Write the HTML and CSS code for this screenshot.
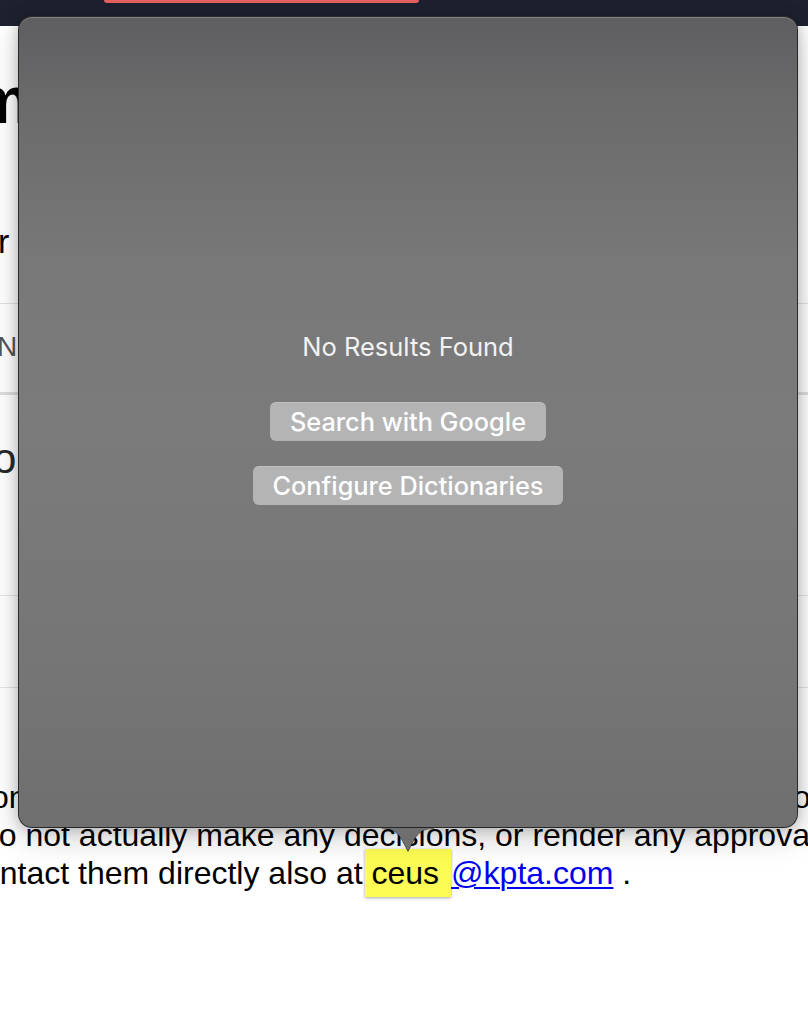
FILE: index.html
```html
<!DOCTYPE html>
<html lang="en">
<head>
<meta charset="utf-8">
<title>Lookup</title>
<link rel="stylesheet" href="styles.css">
</head>
<body>
<div class="topbar"><div class="top-btn"></div></div>
<main class="page">
  <section class="hero">
    <h1 class="hero-title">m</h1>
    <p class="hero-sub">r</p>
  </section>
  <section class="row row-tabs"><span class="tab-label">N</span></section>
  <section class="row row-body"><span class="body-label">o</span></section>
  <section class="row row-empty"></section>
  <section class="notice">
    <p class="notice-text">
      <span class="line line-1">on, the staff members are available to assist, but these do</span>
      <span class="line line-2">do not actually make any decisions, or render any approval</span>
      <span class="line line-3">contact them directly also at <span class="lookup-hl">ceus</span><a class="mail" href="#">@kpta.com</a> .</span>
    </p>
  </section>
</main>

<div class="popover">
  <div class="popover-inner">
    <div class="no-results">No Results Found</div>
    <button class="pop-btn pop-btn-google">Search with Google</button>
    <button class="pop-btn pop-btn-dict">Configure Dictionaries</button>
  </div>
  <svg class="popover-arrow" width="52" height="25" viewBox="0 0 52 25" aria-hidden="true">
    <path d="M0 0 C11 0 16 5 20 12 L26 23.5 L32 12 C36 5 41 0 52 0 Z" fill="#6f6f6f"/>
    <path d="M0 0.5 C11 0.5 16 5 20 12 L26 23.5 L32 12 C36 5 41 0.5 52 0.5" fill="none" stroke="rgba(0,0,0,0.45)" stroke-width="1"/>
  </svg>
</div>
</body>
</html>
```

FILE: styles.css
```css
* { box-sizing: border-box; }

html, body {
  margin: 0;
  padding: 0;
}

body {
  width: 808px;
  height: 1028px;
  overflow: hidden;
  position: relative;
  background: #ffffff;
  font-family: "Liberation Sans", Arial, sans-serif;
  color: #000;
}

.topbar {
  height: 26px;
  background: #1e2230;
}

.top-btn {
  margin-left: 104px;
  width: 315px;
  height: 3px;
  background: #e3615f;
  border-radius: 0 0 5px 5px;
}

.page {
  overflow: hidden;
}

.hero {
  height: 278px;
  padding-top: 42px;
  border-bottom: 1px solid #e2e2e2;
}

.hero-title {
  margin: 0 0 0 -28px;
  font-size: 66px;
  line-height: 64px;
  font-weight: 700;
}

.hero-sub {
  margin: 89px 0 0 -2px;
  font-size: 34px;
  line-height: 40px;
}

.row-tabs {
  height: 91px;
  padding-top: 27px;
  border-bottom: 3px solid #dedede;
}

.tab-label {
  display: block;
  margin-left: -3px;
  font-size: 28px;
  line-height: 32px;
  color: #555555;
}

.row-body {
  height: 201px;
  padding-top: 42px;
  border-bottom: 1px solid #e4e4e4;
}

.body-label {
  display: block;
  margin-left: -7px;
  font-size: 42px;
  line-height: 44px;
  color: #2a2a2a;
}

.row-empty {
  height: 92px;
  border-bottom: 1px solid #e4e4e4;
}

.notice {
  padding-top: 90px;
  padding-bottom: 60px;
}

.notice-text {
  margin: 0;
  font-size: 32px;
  line-height: 38px;
  white-space: nowrap;
}

.line { display: block; }
.line-1 { margin-left: -9px; }
.line-2 { margin-left: -19px; }
.line-3 { margin-left: -34px; }

.lookup-hl {
  background: #fdfc55;
  padding: 6px 12px 6px 7px;
  margin-left: -7px;
  box-shadow: 0 1px 3px rgba(0, 0, 0, 0.35);
}

.mail {
  color: #0000ee;
  text-decoration: underline;
  text-decoration-thickness: 2px;
  text-underline-offset: 3px;
}

/* Lookup popover overlay */
.popover {
  position: absolute;
  left: 18px;
  top: 16px;
  width: 780px;
  height: 812px;
  border-radius: 14px;
  border: 1px solid rgba(20, 20, 20, 0.75);
  background: linear-gradient(180deg, #5e5e61 0%, #6a6a6b 10%, #787878 30%, #7b7b7b 50%, #767676 78%, #6f6f6f 100%);
  box-shadow: inset 0 1px 0 rgba(255, 255, 255, 0.22), 0 0 14px rgba(0, 0, 0, 0.22), 0 10px 30px rgba(0, 0, 0, 0.18);
}

.popover-inner {
  display: flex;
  flex-direction: column;
  align-items: center;
  padding-top: 316px;
  font-family: Inter, "Noto Sans", sans-serif;
}

.no-results {
  font-size: 25.5px;
  line-height: 28px;
  color: #f2f2f2;
}

.pop-btn {
  height: 39px;
  padding: 0 20px;
  border: none;
  border-radius: 6px;
  background: #b4b4b4;
  box-shadow: inset 0 1px 0 rgba(255, 255, 255, 0.18);
  color: #ffffff;
  font-family: Inter, "Noto Sans", sans-serif;
  font-size: 25.3px;
  font-weight: 500;
  line-height: 39px;
}

.pop-btn-google { margin-top: 41px; }
.pop-btn-dict { margin-top: 25px; }

.popover-arrow {
  position: absolute;
  left: 363px;
  top: 811px;
  display: block;
}
```
